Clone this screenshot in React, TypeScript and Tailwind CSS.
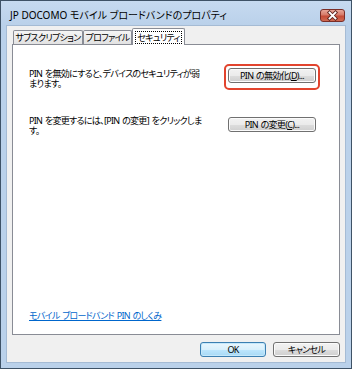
import React from "react";

const btn =
  "flex items-center justify-center rounded-[3px] border border-[#707070] bg-[linear-gradient(to_bottom,#f2f2f2_0%,#ebebeb_50%,#dddddd_51%,#cfcfcf_100%)] shadow-[inset_0_0_0_1px_#fbfbfb] text-[9px] tracking-[-0.7px] [word-spacing:1px] leading-none text-black";

function CloseBtn() {
  return (
    <div className="w-[25px] h-[13px] rounded-[3px] border border-[#7b2e27] bg-[linear-gradient(to_bottom,#e8a698_0%,#d67a68_45%,#c54b36_55%,#cf6a52_100%)] flex items-center justify-center">
      <svg width="23" height="11" viewBox="0 0 23 11">
        <path d="M8.5 2.5 L14.5 8.5 M14.5 2.5 L8.5 8.5" stroke="#5e2620" strokeWidth="3.6" strokeLinecap="square" />
        <path d="M8.5 2.5 L14.5 8.5 M14.5 2.5 L8.5 8.5" stroke="#ffffff" strokeWidth="1.8" strokeLinecap="square" />
      </svg>
    </div>
  );
}

export default function App() {
  return (
    <div className="w-[352px] h-[369px] border border-[#3e5266] bg-[#bad1ea] flex flex-col text-black font-['Noto_Sans','Noto_Sans_CJK_JP',sans-serif] [font-feature-settings:'palt']">
      <div className="h-[24px] flex items-center pt-[4px] pl-[9px] pr-[6px] bg-[linear-gradient(to_bottom,#c6daf0,#bad1ea)]">
        <span className="flex-1 text-[10px] leading-none whitespace-nowrap">
          JP DOCOMO モバイル ブロードバンドのプロパティ
        </span>
        <CloseBtn />
      </div>
      <div className="mx-[5px] flex-1 border border-[#a5bbd4] bg-[#f0f0f0] flex flex-col px-[5px] pt-[2px] text-[9px] tracking-[-0.7px] [word-spacing:1px] leading-[10px]">
        <div className="flex items-end h-[16px] pl-[1px]">
          <div className="w-[70px] h-[14px] border border-b-0 border-[#898c95] rounded-t-[2px] bg-[linear-gradient(to_bottom,#f5f5f5,#e2e2e2)] flex items-center justify-center whitespace-nowrap">
            サブスクリプション
          </div>
          <div className="w-[49px] h-[14px] border border-b-0 border-[#898c95] rounded-t-[2px] bg-[linear-gradient(to_bottom,#f5f5f5,#e2e2e2)] flex items-center justify-center whitespace-nowrap">
            プロファイル
          </div>
          <div className="relative z-10 w-[53px] h-[17px] -mb-[1px] border border-b-0 border-[#898c95] rounded-t-[2px] bg-white flex items-start justify-center pt-[2px]">
            <span className="h-[13px] px-[2px] outline outline-1 outline-dotted outline-black -outline-offset-1 flex items-center whitespace-nowrap">
              セキュリティ
            </span>
          </div>
        </div>
        <div className="h-[291px] border border-[#898c95] bg-white flex flex-col pl-[16px] pt-[19px]">
          <div className="flex">
            <div className="w-[195px] mt-[5px] whitespace-nowrap">
              PIN を無効にすると、デバイスのセキュリティが弱
              <br />
              まります。
            </div>
            <div className="w-[96px] h-[26px] border-2 border-[#e2442e] rounded-[5px] flex items-start justify-center pt-[2px]">
              <div className={btn + " w-[88px] h-[15px]"}>
                PIN の無効化(<span className="underline">D</span>)...
              </div>
            </div>
          </div>
          <div className="flex mt-[26px]">
            <div className="w-[195px] whitespace-nowrap">
              PIN を変更するには、[PIN の変更] をクリックしま
              <br />
              す。
            </div>
            <div className="w-[96px] flex justify-center pt-[1px]">
              <div className={btn + " w-[88px] h-[15px]"}>
                PIN の変更(<span className="underline">C</span>)...
              </div>
            </div>
          </div>
          <div className="mt-auto mb-[13px] text-[#0066cc] underline whitespace-nowrap">
            モバイル ブロードバンド PIN のしくみ
          </div>
        </div>
        <div className="flex justify-end gap-[7px] mt-[7px]">
          <div className="w-[66px] h-[15px] flex items-center justify-center rounded-[3px] border border-[#3c7fb1] bg-[linear-gradient(to_bottom,#eaf6fd_0%,#d9f0fc_50%,#bee6fd_51%,#a7d9f5_100%)] shadow-[inset_0_0_0_1px_#c5e8fb] text-[9px] leading-none">
            OK
          </div>
          <div className={btn + " w-[67px] h-[15px]"}>キャンセル</div>
        </div>
      </div>
      <div className="h-[5px]" />
    </div>
  );
}
